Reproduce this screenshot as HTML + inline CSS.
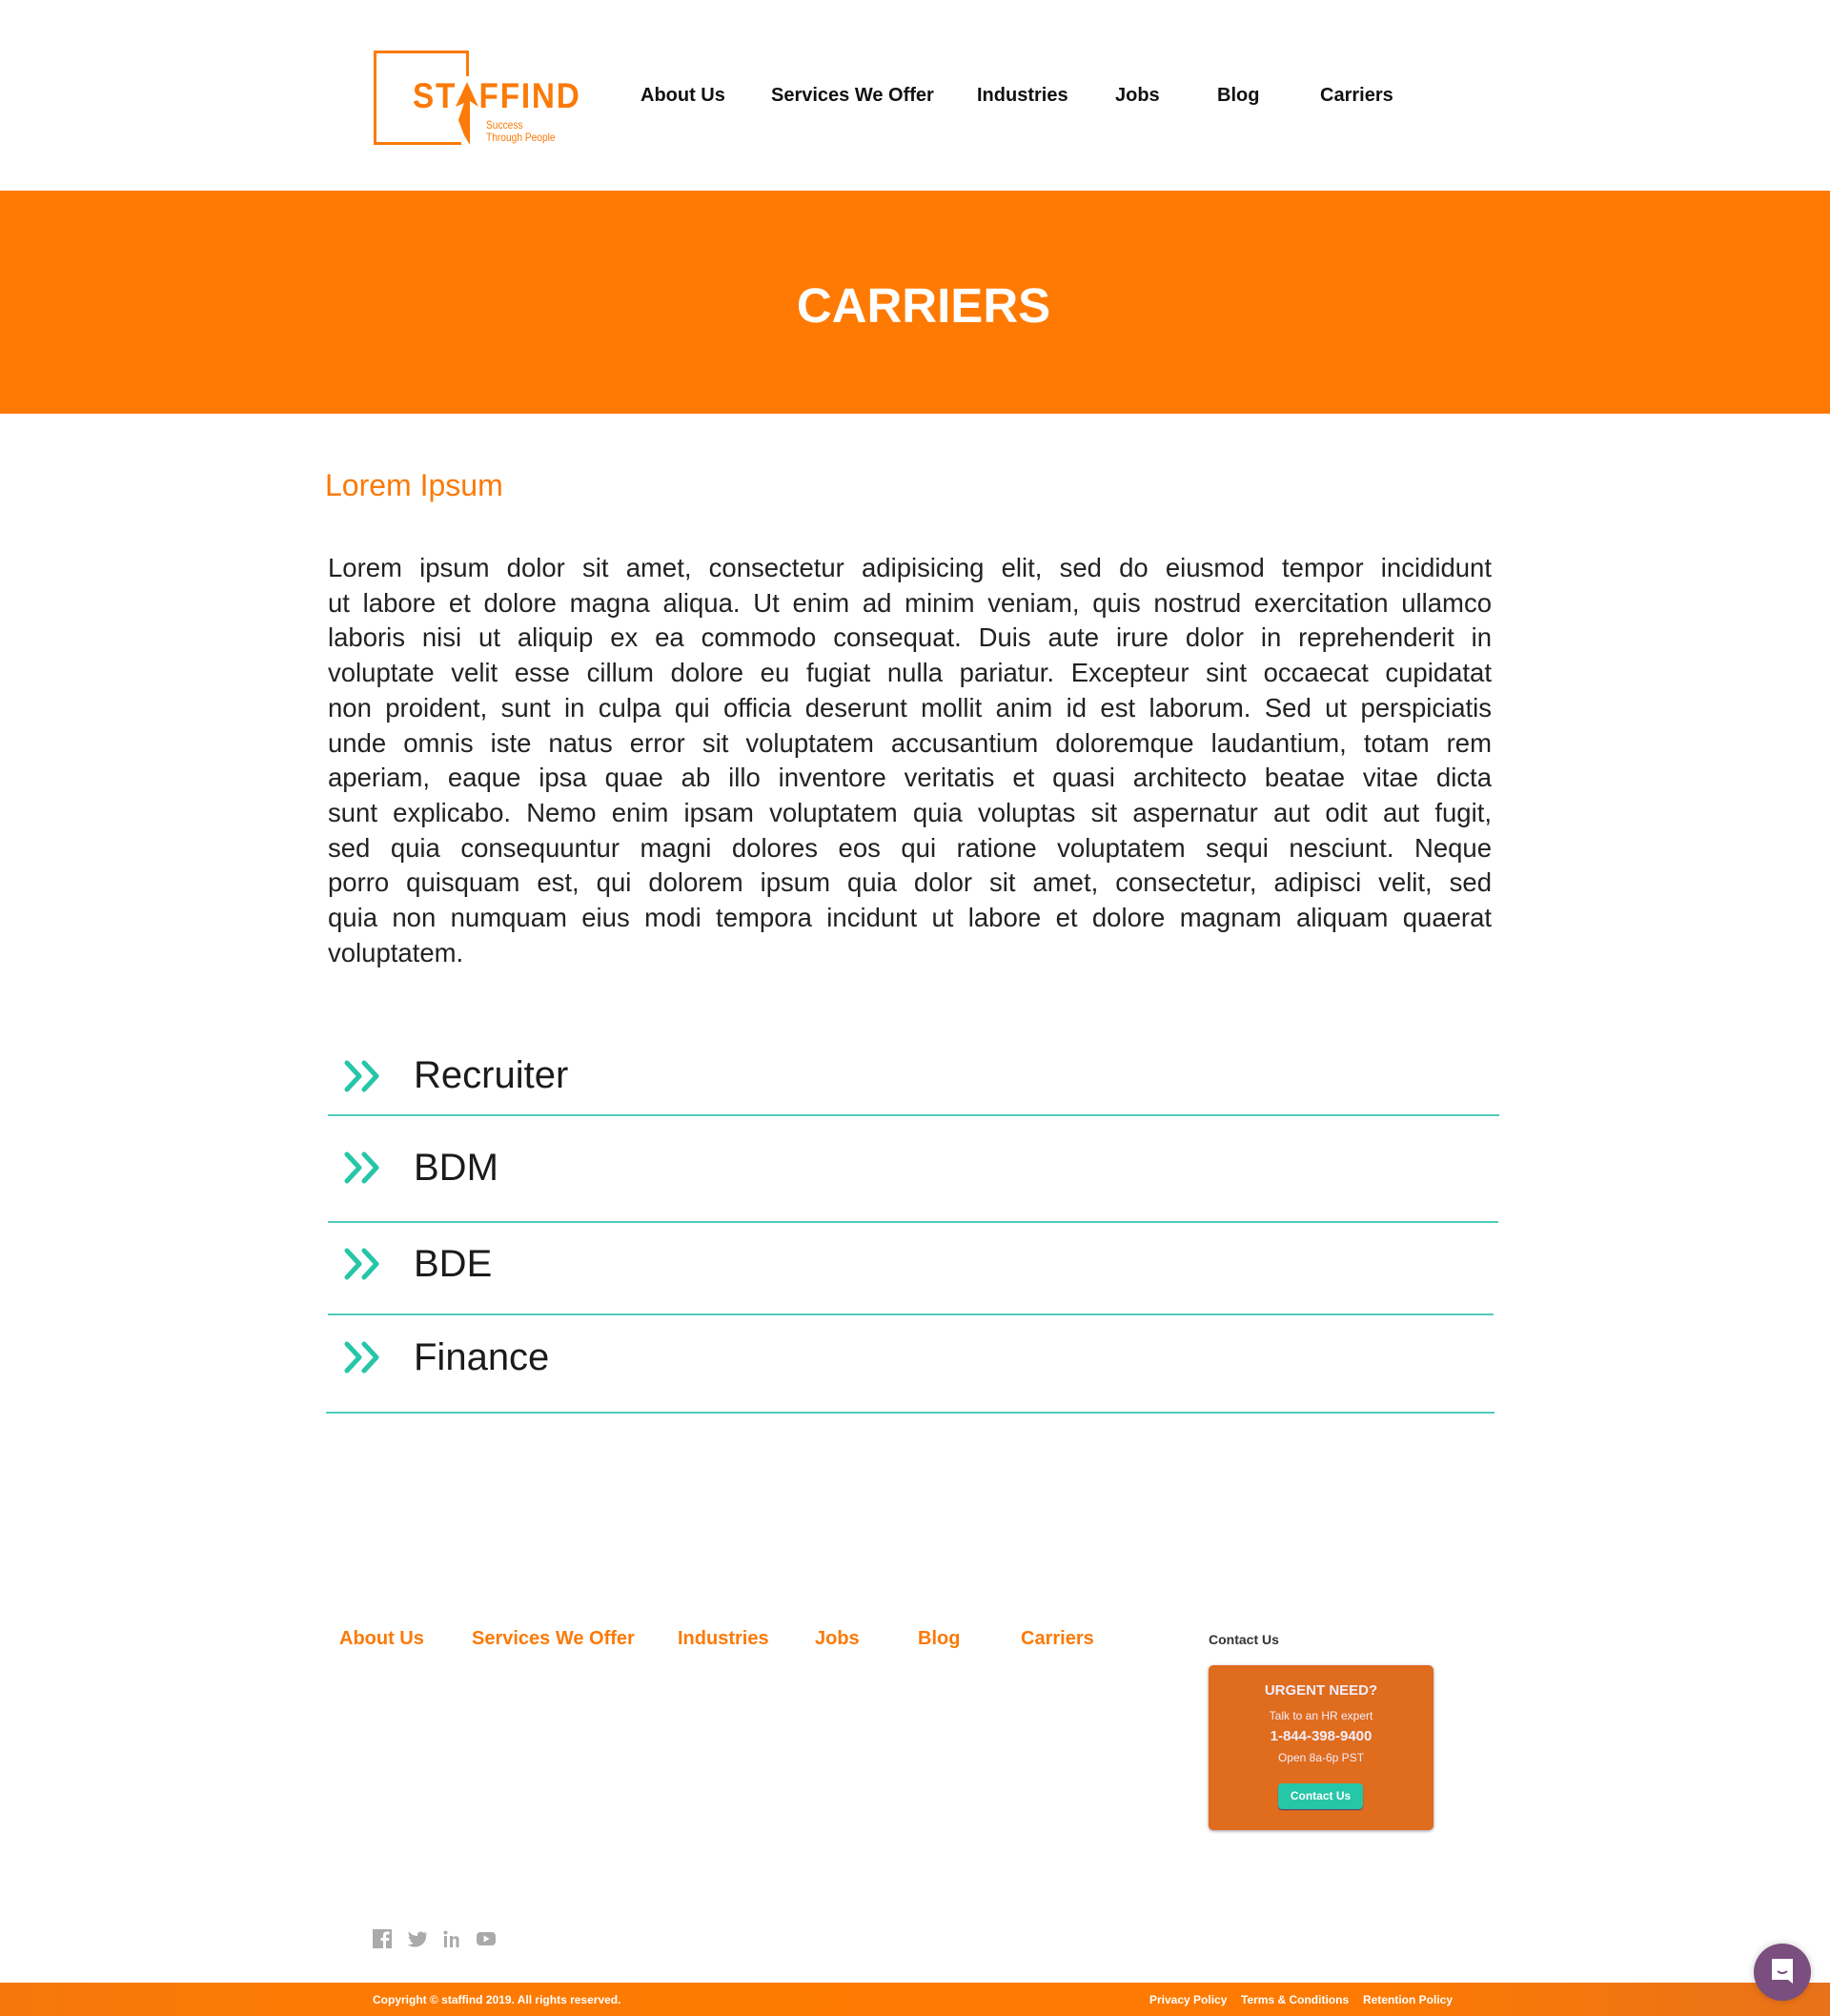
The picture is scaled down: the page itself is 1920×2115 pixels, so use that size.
<!DOCTYPE html>
<html><head><meta charset="utf-8">
<style>
*{margin:0;padding:0;box-sizing:border-box}
body{width:1920px;height:2115px;position:relative;background:#fff;font-family:"Liberation Sans",sans-serif;overflow:hidden;color:#222}
.a{position:absolute;white-space:nowrap}
.nav{font-size:20px;font-weight:bold;color:#111;top:89px}
.p{position:absolute;left:344px;width:1221px;font-size:27.5px;color:#222;line-height:36.7px;top:578px}
.p div{text-align:justify;text-align-last:justify;white-space:nowrap}
.p div.l{text-align-last:left}
.job{position:absolute;left:434px;font-size:40px;color:#1b1b1b;line-height:1}
.ln{position:absolute;height:2px;background:#52cbbb}
.ic{position:absolute;left:360px}
.fl{font-size:20px;font-weight:bold;color:#fb7a08;top:1708px}
</style></head><body>
<!-- logo -->
<div class="a" style="left:392px;top:53px;width:3px;height:99px;background:#fb7a08"></div>
<div class="a" style="left:392px;top:53px;width:100px;height:3px;background:#fb7a08"></div>
<div class="a" style="left:489px;top:53px;width:3px;height:27px;background:#fb7a08"></div>
<div class="a" style="left:392px;top:149px;width:92px;height:3px;background:#fb7a08"></div>
<div class="a" style="left:433px;top:80px;font-size:37px;font-weight:bold;color:#fb7a08;letter-spacing:2px;transform:scaleX(0.9);transform-origin:left">ST<span style="opacity:0">A</span>FFIND</div>
<svg class="a" style="left:472px;top:84px" width="36" height="70" viewBox="0 0 36 70"><path d="M18 2 L30 28 L21 22 L21 68 L15 58 L9 42 L15 24 L6 28 Z" fill="#fb7a08"/></svg>
<div class="a" style="left:510px;top:125px;font-size:12px;color:#fb7a08;line-height:13px;transform:scaleX(0.85);transform-origin:left">Success<br>Through People</div>
<div class="a nav" style="left:672px">About Us</div>
<div class="a nav" style="left:809px">Services We Offer</div>
<div class="a nav" style="left:1025px">Industries</div>
<div class="a nav" style="left:1170px">Jobs</div>
<div class="a nav" style="left:1277px">Blog</div>
<div class="a nav" style="left:1385px">Carriers</div>
<!-- hero -->
<div class="a" style="left:0;top:200px;width:1920px;height:234px;background:#fe7a03"></div>
<div class="a" style="left:0;top:291px;width:1938px;text-align:center;font-size:51px;font-weight:bold;color:#fff">CARRIERS</div>
<div class="a" style="left:341px;top:491px;font-size:32px;color:#fb7a08">Lorem Ipsum</div>
<div class="p">
<div>Lorem ipsum dolor sit amet, consectetur adipisicing elit, sed do eiusmod tempor incididunt</div>
<div>ut labore et dolore magna aliqua. Ut enim ad minim veniam, quis nostrud exercitation ullamco</div>
<div>laboris nisi ut aliquip ex ea commodo consequat. Duis aute irure dolor in reprehenderit in</div>
<div>voluptate velit esse cillum dolore eu fugiat nulla pariatur. Excepteur sint occaecat cupidatat</div>
<div>non proident, sunt in culpa qui officia deserunt mollit anim id est laborum. Sed ut perspiciatis</div>
<div>unde omnis iste natus error sit voluptatem accusantium doloremque laudantium, totam rem</div>
<div>aperiam, eaque ipsa quae ab illo inventore veritatis et quasi architecto beatae vitae dicta</div>
<div>sunt explicabo. Nemo enim ipsam voluptatem quia voluptas sit aspernatur aut odit aut fugit,</div>
<div>sed quia consequuntur magni dolores eos qui ratione voluptatem sequi nesciunt. Neque</div>
<div>porro quisquam est, qui dolorem ipsum quia dolor sit amet, consectetur, adipisci velit, sed</div>
<div>quia non numquam eius modi tempora incidunt ut labore et dolore magnam aliquam quaerat</div>
<div class="l">voluptatem.</div>
</div>
<!-- jobs -->
<svg class="ic" style="top:1112px" width="42" height="34" viewBox="0 0 42 34"><path d="M4 3 L17 17 L4 31 M22 3 L35 17 L22 31" fill="none" stroke="#26c6a8" stroke-width="5" stroke-linecap="round" stroke-linejoin="round"/></svg>
<div class="job" style="top:1108px">Recruiter</div>
<div class="ln" style="left:344px;top:1169px;width:1229px"></div>
<svg class="ic" style="top:1208px" width="42" height="34" viewBox="0 0 42 34"><path d="M4 3 L17 17 L4 31 M22 3 L35 17 L22 31" fill="none" stroke="#26c6a8" stroke-width="5" stroke-linecap="round" stroke-linejoin="round"/></svg>
<div class="job" style="top:1205px">BDM</div>
<div class="ln" style="left:344px;top:1281px;width:1228px"></div>
<svg class="ic" style="top:1309px" width="42" height="34" viewBox="0 0 42 34"><path d="M4 3 L17 17 L4 31 M22 3 L35 17 L22 31" fill="none" stroke="#26c6a8" stroke-width="5" stroke-linecap="round" stroke-linejoin="round"/></svg>
<div class="job" style="top:1306px">BDE</div>
<div class="ln" style="left:344px;top:1378px;width:1223px"></div>
<svg class="ic" style="top:1407px" width="42" height="34" viewBox="0 0 42 34"><path d="M4 3 L17 17 L4 31 M22 3 L35 17 L22 31" fill="none" stroke="#26c6a8" stroke-width="5" stroke-linecap="round" stroke-linejoin="round"/></svg>
<div class="job" style="top:1404px">Finance</div>
<div class="ln" style="left:342px;top:1481px;width:1226px"></div>
<!-- footer -->
<div class="a fl" style="left:356px">About Us</div>
<div class="a fl" style="left:495px">Services We Offer</div>
<div class="a fl" style="left:711px">Industries</div>
<div class="a fl" style="left:855px">Jobs</div>
<div class="a fl" style="left:963px">Blog</div>
<div class="a fl" style="left:1071px">Carriers</div>
<div class="a" style="left:1268px;top:1712px;font-size:14px;font-weight:bold;color:#333">Contact Us</div>
<div class="a" style="left:1268px;top:1747px;width:236px;height:173px;background:#e06c1e;border-radius:5px;box-shadow:0 1px 3px rgba(60,40,90,.5);color:#f3eefc;text-align:center">
<div style="position:absolute;top:18px;width:100%;font-size:15px;font-weight:bold">URGENT NEED?</div>
<div style="position:absolute;top:46px;width:100%;font-size:12px">Talk to an HR expert</div>
<div style="position:absolute;top:66px;width:100%;font-size:15px;font-weight:bold">1-844-398-9400</div>
<div style="position:absolute;top:90px;width:100%;font-size:12px">Open 8a-6p PST</div>
<div style="position:absolute;top:124px;left:73px;width:89px;height:27px;background:#26c6a8;border-radius:4px;font-size:12px;font-weight:bold;line-height:27px;color:#fff;box-shadow:0 1px 1px #4a3a70">Contact Us</div>
</div>
<!-- social -->
<svg class="a" style="left:391px;top:2024px" width="140" height="20" viewBox="0 0 140 20">
<rect x="0" y="0" width="20" height="20" fill="#aaa"/><path d="M14 20 V12 H17 L17.5 9 H14 V7 C14 6 14.5 5.5 15.5 5.5 H17.5 V2.5 H14.5 C12 2.5 11 4 11 6.5 V9 H8.5 V12 H11 V20 Z" fill="#fff"/>
<g transform="translate(-9 0)"><path d="M66 4 C65 4.5 64 4.8 63 5 C64 4.3 64.7 3.5 65 2.5 C64 3 63 3.5 62 3.7 C60 1.5 56 2.5 56 6 V7 C52 7 49 5 47 2.5 C46 4.5 47 7 48.5 8 C48 8 47.3 7.8 46.8 7.5 C46.8 9.5 48 11 50 11.5 C49.3 11.7 48.7 11.7 48 11.6 C48.5 13.2 50 14.3 52 14.4 C50 16 47.5 16.6 45.5 16.4 C55 22 66 16 65 6 C65.6 5.5 66 4.8 66 4Z" fill="#aaa"/></g>
<g transform="translate(-6 0)"><rect x="81" y="7" width="3" height="12" fill="#aaa"/><circle cx="82.5" cy="3.5" r="2" fill="#aaa"/><path d="M87 7 H90 V9 C91 7 96 6 96.5 10 V19 H93.5 V11.5 C93.5 9 90 9 90 12 V19 H87Z" fill="#aaa"/></g>
<g transform="translate(-9 0)"><rect x="118" y="3" width="20" height="14" rx="4" fill="#aaa"/><path d="M125.5 6.5 L131.5 10 L125.5 13.5Z" fill="#fff"/></g>
</svg>
<div class="a" style="left:0;top:2080px;width:1920px;height:35px;background:linear-gradient(90deg,#f6780c,#fd7b02 20%,#fe7a02 75%,#e8721a)"></div>
<div class="a" style="left:391px;top:2091px;font-size:12px;font-weight:bold;color:#fff">Copyright © staffind 2019. All rights reserved.</div>
<div class="a" style="left:1206px;top:2091px;font-size:12px;font-weight:bold;color:#fff">Privacy Policy</div>
<div class="a" style="left:1302px;top:2091px;font-size:12px;font-weight:bold;color:#fff">Terms &amp; Conditions</div>
<div class="a" style="left:1430px;top:2091px;font-size:12px;font-weight:bold;color:#fff">Retention Policy</div>
<div class="a" style="left:1840px;top:2039px;width:60px;height:60px;border-radius:50%;background:#7a4e7e;box-shadow:0 0 8px rgba(0,0,0,.2)"></div>
<svg class="a" style="left:1856px;top:2053px" width="28" height="32" viewBox="0 0 28 32"><path d="M3 2 H25 V28 L20 24 H3 Z" fill="#fff"/><path d="M9 15 Q14 19 19 15" stroke="#7a4e7e" stroke-width="2" fill="none"/></svg>
</body></html>
